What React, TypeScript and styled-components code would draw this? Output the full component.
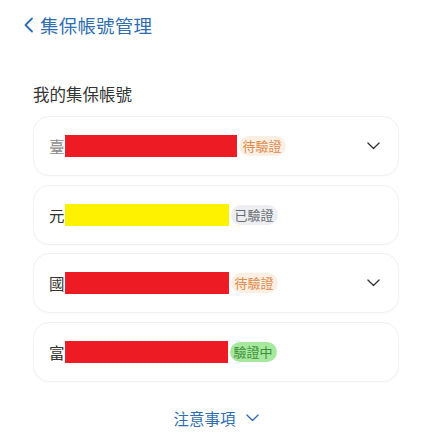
import styled, { createGlobalStyle } from "styled-components";

const GlobalStyle = createGlobalStyle`
  html, body {
    margin: 0;
    padding: 0;
    background: #ffffff;
    font-family: "Noto Sans CJK TC", "Noto Sans", sans-serif;
  }
`;

type Status = "pending" | "verified" | "verifying";

const accounts: {
  prefix: string;
  bar: string;
  barWidth: number;
  status: Status;
  expandable: boolean;
  muted?: boolean;
}[] = [
  { prefix: "臺", bar: "#ed1c24", barWidth: 172, status: "pending", expandable: true, muted: true },
  { prefix: "元", bar: "#fff200", barWidth: 164, status: "verified", expandable: false },
  { prefix: "國", bar: "#ed1c24", barWidth: 164, status: "pending", expandable: true },
  { prefix: "富", bar: "#ed1c24", barWidth: 163, status: "verifying", expandable: false },
];

const statusLabel: Record<Status, string> = {
  pending: "待驗證",
  verified: "已驗證",
  verifying: "驗證中",
};

const Page = styled.div`
  width: 432px;
  height: 442px;
  box-sizing: border-box;
  display: flex;
  flex-direction: column;
`;

const Header = styled.div`
  height: 50px;
  display: flex;
  align-items: center;
  padding-left: 23px;
  gap: 6px;
  color: #2f6db0;
  font-size: 18.5px;
  letter-spacing: 0.2px;
`;

const Content = styled.div`
  padding: 34px 33px 0 33px;
  display: flex;
  flex-direction: column;
`;

const SectionTitle = styled.div`
  font-size: 16.5px;
  color: #333333;
  line-height: 20px;
  margin-bottom: 12px;
`;

const List = styled.div`
  display: flex;
  flex-direction: column;
  gap: 8.5px;
`;

const Card = styled.div`
  height: 60px;
  box-sizing: border-box;
  border: 1px solid #f1f1f1;
  border-radius: 16px;
  background: #ffffff;
  box-shadow: 0 1px 3px rgba(0, 0, 0, 0.02);
  display: flex;
  align-items: center;
  padding: 0 18px 0 15px;
`;

const Prefix = styled.span<{ $muted?: boolean }>`
  font-size: 15.5px;
  color: ${(p) => (p.$muted ? "#8a8a8a" : "#333333")};
  line-height: 22px;
`;

const Bar = styled.div<{ $color: string }>`
  height: 22px;
  background: ${(p) => p.$color};
  flex-shrink: 0;
`;

const Badge = styled.span<{ $status: Status }>`
  margin-left: 2px;
  padding: 0 4px;
  height: 20px;
  line-height: 20px;
  border-radius: 10px;
  font-size: 13px;
  color: ${(p) =>
    p.$status === "pending" ? "#e08a4c" : p.$status === "verified" ? "#666a70" : "#3f8f3a"};
  background: ${(p) =>
    p.$status === "pending" ? "#fdefe3" : p.$status === "verified" ? "#eceef1" : "#a6e89d"};
`;

const Spacer = styled.div`
  flex: 1;
`;

const Footer = styled.div`
  display: flex;
  justify-content: center;
  align-items: center;
  gap: 10px;
  margin-top: 25px;
  color: #2f6db0;
  font-size: 15.5px;
`;

const ChevronDown = ({ color, width }: { color: string; width: number }) => (
  <svg width={width} height={width / 2 + 1} viewBox="0 0 14 8" fill="none">
    <path d="M1 1l6 6 6-6" stroke={color} strokeWidth="1.4" strokeLinecap="round" strokeLinejoin="round" />
  </svg>
);

const App = () => {
  return (
    <>
      <GlobalStyle />
      <Page>
        <Header>
          <svg width="11" height="16" viewBox="0 0 11 16" fill="none">
            <path d="M9 1.5L2.5 8 9 14.5" stroke="#2f6db0" strokeWidth="1.8" strokeLinecap="round" strokeLinejoin="round" />
          </svg>
          <span>集保帳號管理</span>
        </Header>
        <Content>
          <SectionTitle>我的集保帳號</SectionTitle>
          <List>
            {accounts.map((a, i) => (
              <Card key={i}>
                <Prefix $muted={a.muted}>{a.prefix}</Prefix>
                <Bar $color={a.bar} style={{ width: a.barWidth }} />
                <Badge $status={a.status}>{statusLabel[a.status]}</Badge>
                <Spacer />
                {a.expandable && <ChevronDown color="#333333" width={13} />}
              </Card>
            ))}
          </List>
          <Footer>
            <span>注意事項</span>
            <ChevronDown color="#2f6db0" width={13} />
          </Footer>
        </Content>
      </Page>
    </>
  );
};

export default App;
